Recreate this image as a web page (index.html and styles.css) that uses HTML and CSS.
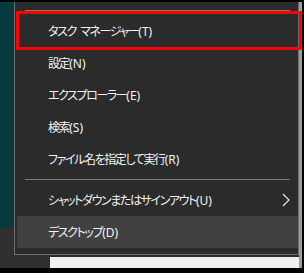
FILE: index.html
```html
<!DOCTYPE html>
<html lang="ja">
<head>
    <meta charset="UTF-8">
    <meta name="viewport" content="width=device-width, initial-scale=1.0">
    <title>コンテキストメニュー</title>
    <link rel="stylesheet" href="styles.css">
</head>
<body>
    <div class="screen">
        <div class="backdrop">
            <div class="side">
                <div class="side-top"></div>
                <div class="side-bottom"></div>
            </div>
            <div class="content">
                <div class="content-top"></div>
                <div class="content-bottom"></div>
            </div>
            <div class="edge"></div>
        </div>

        <div class="menu">
            <div class="separator first"></div>
            <div class="item"><span>タスク マネージャー<span class="key">(T)</span></span></div>
            <div class="item"><span>設定<span class="key">(N)</span></span></div>
            <div class="item"><span>エクスプローラー<span class="key">(E)</span></span></div>
            <div class="item"><span>検索<span class="key">(S)</span></span></div>
            <div class="item"><span>ファイル名を指定して実行<span class="key">(R)</span></span></div>
            <div class="separator"></div>
            <div class="item has-sub">
                <span>シャットダウンまたはサインアウト<span class="key">(U)</span></span>
                <svg class="chevron" width="8" height="14" viewBox="0 0 8 14">
                    <polyline points="1,1 7,7 1,13" fill="none" stroke="#e8e8e8" stroke-width="1.2"/>
                </svg>
            </div>
            <div class="item active"><span>デスクトップ<span class="key">(D)</span></span></div>
        </div>

        <div class="mark"></div>
    </div>
</body>
</html>
```

FILE: styles.css
```css
* {
    margin: 0;
    padding: 0;
    box-sizing: border-box;
}

body {
    background: #000;
    font-family: 'Noto Sans CJK JP', 'Noto Sans', sans-serif;
}

.screen {
    position: relative;
    width: 304px;
    height: 273px;
    background: #000;
    overflow: hidden;
}

.backdrop {
    display: flex;
    height: 100%;
    padding: 2px 2px 5px 0;
}

.side {
    width: 50px;
    display: flex;
    flex-direction: column;
}

.side-top {
    height: 226px;
    background: #073a3d;
}

.side-bottom {
    flex: 1;
    background: #303030;
}

.content {
    flex: 1;
    display: flex;
    flex-direction: column;
}

.content-top {
    flex: 1;
    background: #2b2b2b;
}

.content-bottom {
    height: 11px;
    background: #f0f0f0;
}

.edge {
    width: 3px;
    background: #9c9c9c;
}

/* context menu */
.menu {
    position: absolute;
    top: 2px;
    left: 14px;
    width: 285px;
    height: 253px;
    background: #2b2b2b;
    border: 1px solid #6e6e6e;
    border-top: none;
    color: #f2f2f2;
    font-size: 12px;
    letter-spacing: -1.4px;
    word-spacing: 3px;
    font-feature-settings: "palt";
}

.key {
    letter-spacing: 0;
    font-family: 'Noto Sans', sans-serif;
}

.separator {
    height: 9px;
    display: flex;
    align-items: center;
    padding: 0 8px 0 10px;
}

.separator::after {
    content: "";
    flex: 1;
    height: 1px;
    background: #7d7d7d;
}

.separator.first {
    height: 13px;
    align-items: flex-start;
    padding-top: 8px;
}

.item {
    height: 32px;
    display: flex;
    align-items: center;
    justify-content: space-between;
    padding: 0 8px 0 33px;
    line-height: 1;
}

.item.active {
    background: #414141;
    margin-left: 2px;
    padding-left: 31px;
}

.chevron {
    display: block;
}

/* highlight frame drawn over the screenshot */
.mark {
    position: absolute;
    top: 11px;
    left: 16px;
    width: 286px;
    height: 39px;
    border: 3px solid #ff0000;
}
```
